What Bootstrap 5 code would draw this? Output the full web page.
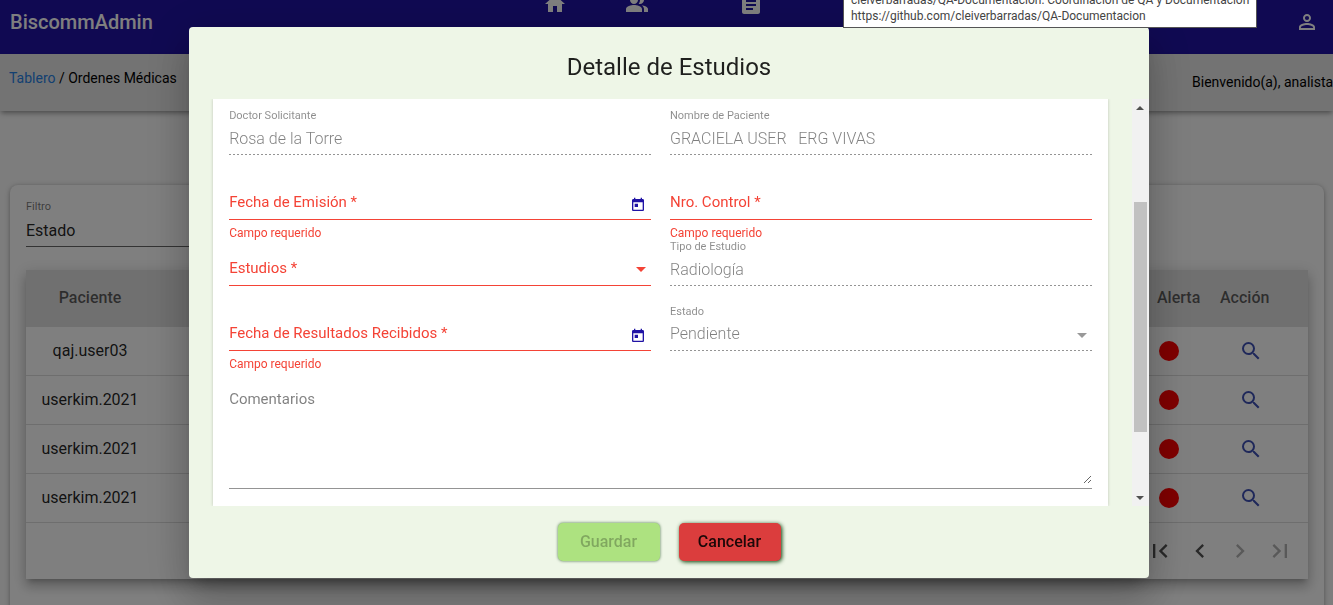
<!DOCTYPE html>
<html lang="es">
<head>
<meta charset="utf-8">
<meta name="viewport" content="width=device-width, initial-scale=1">
<title>BiscommAdmin - Ordenes Médicas</title>
<link href="https://cdn.jsdelivr.net/npm/bootstrap@5.3.0/dist/css/bootstrap.min.css" rel="stylesheet">
<style>
:root { --brand: #2013a5; --warn: #f44336; --bs-backdrop-opacity: .32; }
body { font-family: Roboto, "Liberation Sans", sans-serif; font-size: 16px; line-height: 24px; color: rgba(0,0,0,.87); background: #fafafa; height: 100vh; overflow: hidden; }
svg { display: block; fill: currentColor; }

/* top bar */
.topbar { display: grid; grid-template-columns: 1fr auto 1fr; height: 54px; padding: 0 14px 0 10px; background: var(--brand); color: #fff; }
.topbar a { color: inherit; text-decoration: none; }
.brand-name { font-size: 20px; font-weight: 500; margin-top: 10px; }
.tabs-main { margin: -8px 0 0 8px; }
.tabs-main a { display: flex; justify-content: center; }
.tab-s { width: 70px; } .tab-m { width: 94px; } .tab-l { width: 134px; }
.user-link { margin-top: 10px; }
.crumbs { height: 57px; padding-left: 9px; font-size: 14px; background: #e7e7e7; color: #000; box-shadow: 0 3px 5px -1px rgba(0,0,0,.4); }
.crumbs a { color: #2780e3; text-decoration: none; }
.crumb-path { padding-top: 12px; }
.welcome { padding-top: 16px; width: 141px; white-space: nowrap; }

/* orders panel */
.panel { margin: 74px 9px 0 10px; padding: 13px 16px 40px; background: #fff; border-radius: 8px; box-shadow: 0 1px 5px rgba(0,0,0,.35); }
.filter-box { width: 300px; }
.filter-box label { display: block; font-size: 11px; line-height: 18px; color: rgba(0,0,0,.54); }
.plain-select { appearance: none; display: block; width: 100%; border: 0; padding: 0; background: transparent; font-size: 16px; color: inherit; opacity: 1; }
.filter-box .plain-select { height: 31px; border-bottom: 1px solid rgba(0,0,0,.6); }
.orders { margin-top: 23px; background: #fff; box-shadow: 0 5px 5px -3px rgba(0,0,0,.2), 0 8px 10px 1px rgba(0,0,0,.14), 0 3px 14px 2px rgba(0,0,0,.12); }
.orders table { width: 100%; table-layout: fixed; border-collapse: separate; border-spacing: 0; }
.orders th { height: 57px; padding: 0 0 2px; background: #e0e0e0; font-weight: 500; color: rgba(0,0,0,.6); }
.orders td { height: 49px; padding: 0; border-bottom: 1px solid #dcdcdc; vertical-align: middle; }
.col-name { width: 128px; } .col-alert { width: 63px; } .col-action { width: 88px; }
.alert-dot { display: block; width: 20px; height: 20px; margin-left: 2px; border-radius: 50%; background: #f00; }
.icon-btn { border: 0; padding: 0; background: none; color: inherit; }
.find-btn { display: block; margin-left: 19px; color: #3f51b5; }
.pager { height: 56px; padding-right: 8px; color: rgba(0,0,0,.68); }
.pager .icon-btn { width: 40px; display: flex; justify-content: center; }
.pager .icon-btn:disabled { color: rgba(0,0,0,.3); }

/* dialog */
.modal-backdrop { width: 100%; height: 100%; }
.detail-modal { padding-left: 5px; }
.detail-dialog { width: 72vw; max-width: none; margin: 27px auto; height: calc(100% - 54px); }
.detail-dialog .modal-content { height: 100%; border: 0; border-radius: 4px; background: #eef6e7; color: inherit; box-shadow: 0 11px 15px -7px rgba(0,0,0,.2), 0 24px 38px 3px rgba(0,0,0,.14), 0 9px 46px 8px rgba(0,0,0,.12); }
.dialog-title { margin: 0; height: 72px; padding-top: 24px; font-size: 24px; line-height: 32px; font-weight: 400; text-align: center; }
.dialog-scroll { flex: 1 1 0; min-height: 0; overflow: hidden; }
.sheet { flex: 1; margin: 0 24px; padding: 10px 16px; background: #fff; box-shadow: 0 0 3px rgba(0,0,0,.2); display: grid; grid-template-columns: 1fr 1fr; grid-template-rows: 65px 66px 65px 66px auto; column-gap: 19px; align-content: start; }
.dialog-foot { height: 72px; padding-top: 17px; gap: 19px; }

/* form fields */
.fld { position: relative; color: var(--warn); min-width: 0; }
.fld-line { position: relative; height: 46px; padding-top: 16px; border-bottom: 1px solid var(--warn); }
.fld-line label { position: absolute; left: 0; top: 16px; font-size: 15px; pointer-events: none; }
.fld-line input, .fld-line .plain-select { display: block; width: 100%; height: 26px; padding: 0; border: 0; background: transparent; outline: 0; font-size: 16px; color: rgba(0,0,0,.87); }
.fld-off .fld-line { border: 0; background: repeating-linear-gradient(90deg, rgba(0,0,0,.42) 0 2px, transparent 2px 4px) left bottom / 100% 1px no-repeat; }
.fld-off .fld-line label { top: 0; font-size: 11px; line-height: 14px; color: rgba(0,0,0,.45); }
.fld-off .fld-line input, .fld-off .fld-line .plain-select { font-weight: 300; color: rgba(0,0,0,.5); -webkit-text-fill-color: rgba(0,0,0,.5); }
.fld-err { font-size: 12px; line-height: 14px; margin-top: 6px; }
.fld-tool { position: absolute; right: 5px; bottom: 6px; color: var(--brand); }
.fld-arrow { position: absolute; right: 5px; bottom: 13px; border: 5px solid transparent; border-top-color: currentColor; border-bottom: 0; pointer-events: none; }
.fld-off .fld-arrow { color: rgba(0,0,0,.4); }
.fld-note { grid-column: 1 / -1; position: relative; height: 118px; padding-top: 18px; border-bottom: 1px solid rgba(0,0,0,.42); color: rgba(0,0,0,.5); }
.fld-note label { position: absolute; left: 0; top: 16px; font-size: 15px; pointer-events: none; }
.fld-note textarea { display: block; width: 100%; height: 95px; padding: 0; border: 0; outline: 0; background: transparent; resize: vertical; }

/* dialog scroll bar */
.bar { width: 17px; background: #f1f1f1; color: #505050; }
.bar-end { height: 17px; display: flex; align-items: center; justify-content: center; }
.bar-up, .bar-down { border: 4px solid transparent; }
.bar-up { border-top: 0; border-bottom-color: currentColor; }
.bar-down { border-bottom: 0; border-top-color: currentColor; }
.bar-before { flex: 86; } .bar-thumb { flex: 230; margin: 0 2px; background: #c1c1c1; } .bar-after { flex: 57; }

.act { width: 102px; height: 38px; border: 0; border-radius: 5px; font-size: 16px; font-weight: 500; color: rgba(0,0,0,.87); }
.act-save { background: #ade280; box-shadow: 0 0 3px rgba(0,60,0,.7); }
.act-save:disabled { color: rgba(0,0,0,.26); }
.act-cancel { background: #db3d3d; box-shadow: 1px 1px 4px #043d04; }

/* browser link hint */
.link-hint { position: fixed; z-index: 1080; right: 76px; top: -9px; width: 414px; height: 37px; padding: 1px 7px; background: #fff; border: 1px solid #555; border-top: 0; font: 12px/16px Roboto, "Open Sans", sans-serif; color: #444; white-space: nowrap; }
</style>
</head>
<body>
<svg class="d-none" aria-hidden="true">
  <symbol id="i-find" viewBox="0 0 24 24"><path d="M15.5 14h-.79l-.28-.27A6.47 6.47 0 0 0 16 9.5 6.5 6.5 0 1 0 9.5 16c1.61 0 3.09-.59 4.23-1.57l.27.28v.79l5 4.99L20.49 19l-4.99-5zm-6 0C7.01 14 5 11.99 5 9.5S7.01 5 9.5 5 14 7.01 14 9.5 11.99 14 9.5 14z"/></symbol>
  <symbol id="i-day" viewBox="0 0 24 24"><path d="M19 3h-1V1h-2v2H8V1H6v2H5c-1.110 0-1.990.9-1.990 2L3 19c0 1.100.89 2 2 2h14c1.100 0 2-.9 2-2V5c0-1.100-.9-2-2-2zm0 16H5V8h14v11zM7 10h5v5H7z"/></symbol>
</svg>

<header class="topbar">
  <a href="#" class="brand-name">BiscommAdmin</a>
  <nav class="tabs-main d-flex align-items-start">
    <a href="#" class="tab-s" aria-label="Inicio"><svg width="24" height="24" viewBox="0 0 24 24"><path d="M10 20v-6h4v6h5v-8h3L12 3 2 12h3v8z"/></svg></a>
    <a href="#" class="tab-m" aria-label="Usuarios"><svg width="24" height="24" viewBox="0 0 24 24"><path d="M16.670 13.130C18.040 14.060 19 15.320 19 17v3h4v-3c0-2.180-3.570-3.470-6.330-3.870zM15 12c2.210 0 4-1.790 4-4s-1.790-4-4-4c-.47 0-.91.1-1.330.24C14.500 5.270 15 6.580 15 8s-.5 2.730-1.330 3.760c.42.14.86.24 1.330.24zM9 12c2.210 0 4-1.790 4-4s-1.790-4-4-4-4 1.790-4 4 1.790 4 4 4zm0 1c-2.670 0-8 1.340-8 4v3h16v-3c0-2.660-5.330-4-8-4z"/></svg></a>
    <a href="#" class="tab-l" aria-label="Ordenes"><svg width="24" height="24" viewBox="0 0 24 24"><path d="M19 3h-4.180C14.400 1.840 13.300 1 12 1s-2.400.84-2.820 2H5c-1.100 0-2 .9-2 2v15c0 1.100.9 2 2 2h14c1.100 0 2-.9 2-2V5c0-1.100-.9-2-2-2zm-5 15H7v-2h7v2zm3-4H7v-2h10v2zm0-4H7V8h10v2z"/></svg></a>
  </nav>
  <a href="#" class="user-link ms-auto" aria-label="Perfil"><svg width="24" height="24" viewBox="0 0 24 24"><path d="M12 5.900a2.100 2.100 0 1 1 0 4.200 2.100 2.100 0 0 1 0-4.200m0 9c2.970 0 6.100 1.460 6.100 2.100v1.100H5.900V17c0-.64 3.130-2.100 6.100-2.100M12 4C9.790 4 8 5.790 8 8s1.790 4 4 4 4-1.790 4-4-1.790-4-4-4zm0 9c-2.670 0-8 1.340-8 4v3h16v-3c0-2.660-5.330-4-8-4z"/></svg></a>
</header>
<div class="crumbs d-flex justify-content-between">
  <div class="crumb-path"><a href="#">Tablero</a> / Ordenes Médicas</div>
  <div class="welcome">Bienvenido(a), analista</div>
</div>

<main class="panel">
  <div class="filter-box">
    <label for="filtro">Filtro</label>
    <select id="filtro" class="plain-select"><option>Estado</option></select>
  </div>
  <div class="orders">
    <table>
      <colgroup><col class="col-name"><col><col class="col-alert"><col class="col-action"></colgroup>
      <thead><tr><th class="text-center">Paciente</th><th></th><th>Alerta</th><th>Acción</th></tr></thead>
      <tbody>
        <tr><td class="text-center">qaj.user03</td><td></td><td><span class="alert-dot"></span></td><td><button class="icon-btn find-btn" aria-label="Ver"><svg width="24" height="24"><use href="#i-find"/></svg></button></td></tr>
        <tr><td class="text-center">userkim.2021</td><td></td><td><span class="alert-dot"></span></td><td><button class="icon-btn find-btn" aria-label="Ver"><svg width="24" height="24"><use href="#i-find"/></svg></button></td></tr>
        <tr><td class="text-center">userkim.2021</td><td></td><td><span class="alert-dot"></span></td><td><button class="icon-btn find-btn" aria-label="Ver"><svg width="24" height="24"><use href="#i-find"/></svg></button></td></tr>
        <tr><td class="text-center">userkim.2021</td><td></td><td><span class="alert-dot"></span></td><td><button class="icon-btn find-btn" aria-label="Ver"><svg width="24" height="24"><use href="#i-find"/></svg></button></td></tr>
      </tbody>
    </table>
    <div class="pager d-flex align-items-center justify-content-end">
      <button class="icon-btn" aria-label="Primera"><svg width="28" height="28" viewBox="0 0 24 24"><path d="M18.410 16.590L13.820 12l4.590-4.590L17 6l-6 6 6 6zM6 6h2v12H6z"/></svg></button>
      <button class="icon-btn" aria-label="Anterior"><svg width="28" height="28" viewBox="0 0 24 24"><path d="M15.410 7.410L14 6l-6 6 6 6 1.410-1.410L10.830 12z"/></svg></button>
      <button class="icon-btn" aria-label="Siguiente" disabled><svg width="28" height="28" viewBox="0 0 24 24"><path d="M10 6L8.590 7.410 13.170 12l-4.580 4.590L10 18l6-6z"/></svg></button>
      <button class="icon-btn" aria-label="Última" disabled><svg width="28" height="28" viewBox="0 0 24 24"><path d="M5.590 7.410L10.180 12l-4.590 4.590L7 18l6-6-6-6zM16 6h2v12h-2z"/></svg></button>
    </div>
  </div>
</main>

<div class="modal-backdrop show"></div>
<div class="modal d-block detail-modal" role="dialog" aria-modal="true" aria-labelledby="detalle">
  <div class="modal-dialog detail-dialog">
    <form class="modal-content">
      <h1 class="dialog-title" id="detalle">Detalle de Estudios</h1>
      <div class="dialog-scroll d-flex">
        <div class="sheet">
          <div class="fld fld-off"><div class="fld-line"><label for="doctor">Doctor Solicitante</label><input id="doctor" type="text" value="Rosa de la Torre" disabled></div></div>
          <div class="fld fld-off"><div class="fld-line"><label for="paciente">Nombre de Paciente</label><input id="paciente" type="text" value="GRACIELA USER   ERG VIVAS" disabled></div></div>

          <div class="fld">
            <div class="fld-line"><label for="emision">Fecha de Emisión *</label><input id="emision" type="text">
              <button type="button" class="icon-btn fld-tool" aria-label="Elegir fecha"><svg width="16" height="16"><use href="#i-day"/></svg></button></div>
            <div class="fld-err">Campo requerido</div>
          </div>
          <div class="fld"><div class="fld-line"><label for="control">Nro. Control *</label><input id="control" type="text"></div><div class="fld-err">Campo requerido</div></div>

          <div class="fld"><div class="fld-line"><label for="estudios">Estudios *</label><select id="estudios" class="plain-select"><option></option></select><span class="fld-arrow"></span></div></div>
          <div class="fld fld-off"><div class="fld-line"><label for="tipo">Tipo de Estudio</label><input id="tipo" type="text" value="Radiología" disabled></div></div>

          <div class="fld">
            <div class="fld-line"><label for="resultados">Fecha de Resultados Recibidos *</label><input id="resultados" type="text">
              <button type="button" class="icon-btn fld-tool" aria-label="Elegir fecha"><svg width="16" height="16"><use href="#i-day"/></svg></button></div>
            <div class="fld-err">Campo requerido</div>
          </div>
          <div class="fld fld-off"><div class="fld-line"><label for="estado">Estado</label><select id="estado" class="plain-select" disabled><option>Pendiente</option></select><span class="fld-arrow"></span></div></div>

          <div class="fld-note"><label for="comentarios">Comentarios</label><textarea id="comentarios"></textarea></div>
        </div>
        <div class="bar d-flex flex-column" aria-hidden="true">
          <div class="bar-end"><span class="bar-up"></span></div>
          <div class="bar-before"></div><div class="bar-thumb"></div><div class="bar-after"></div>
          <div class="bar-end"><span class="bar-down"></span></div>
        </div>
      </div>
      <div class="dialog-foot d-flex justify-content-center">
        <button type="submit" class="act act-save" disabled>Guardar</button>
        <button type="button" class="act act-cancel">Cancelar</button>
      </div>
    </form>
  </div>
</div>

<div class="link-hint" role="tooltip">cleiverbarradas/QA-Documentacion: Coordinación de QA y Documentación<br>https://github.com/cleiverbarradas/QA-Documentacion</div>

<script src="https://cdn.jsdelivr.net/npm/bootstrap@5.3.0/dist/js/bootstrap.bundle.min.js"></script>
</body>
</html>
